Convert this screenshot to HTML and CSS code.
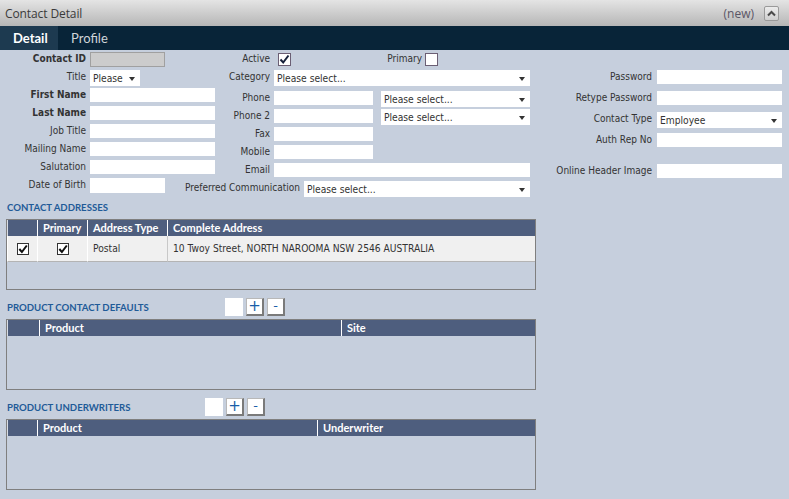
FILE: index.html
```html
<!DOCTYPE html>
<html>
<head>
<meta charset="utf-8">
<link rel="stylesheet" href="styles.css">
</head>
<body>
<div class="titlebar">
  <span class="title">Contact Detail</span>
  <span class="grow"></span>
  <span class="new">(new)</span>
  <span class="collapse"><svg width="13" height="13" viewBox="0 0 13 13"><path d="M3 8.5 L6.5 5 L10 8.5" fill="none" stroke="#4a4a4a" stroke-width="2"/></svg></span>
</div>
<div class="tabs">
  <div class="tab active">Detail</div>
  <div class="tab">Profile</div>
</div>
<div class="form">
  <div class="col col-left">
    <div class="row"><span class="lbl b">Contact ID</span><span class="box ro w75"></span></div>
    <div class="row"><span class="lbl">Title</span><span class="sel w50"><span class="st">Please</span><span class="arr"></span></span></div>
    <div class="row"><span class="lbl b">First Name</span><span class="box w125"></span></div>
    <div class="row"><span class="lbl b">Last Name</span><span class="box w125"></span></div>
    <div class="row"><span class="lbl">Job Title</span><span class="box w125"></span></div>
    <div class="row"><span class="lbl">Mailing Name</span><span class="box w125"></span></div>
    <div class="row"><span class="lbl">Salutation</span><span class="box w125"></span></div>
    <div class="row"><span class="lbl">Date of Birth</span><span class="box tall w75"></span></div>
  </div>
  <div class="col col-mid">
    <div class="row"><span class="lbl">Active</span><span class="chk active"><svg width="11" height="11" viewBox="0 0 11 11"><path d="M1.5 5.5 L4.2 8.5 L9.5 1.5" fill="none" stroke="#15203a" stroke-width="2"/></svg></span><span class="lbl2">Primary</span><span class="chk"></span></div>
    <div class="row r21"><span class="lbl">Category</span><span class="sel w256"><span class="st">Please select...</span><span class="arr"></span></span></div>
    <div class="row"><span class="lbl">Phone</span><span class="box w99"></span><span class="sel w149 ml8"><span class="st">Please select...</span><span class="arr"></span></span></div>
    <div class="row"><span class="lbl">Phone 2</span><span class="box w99"></span><span class="sel w149 ml8"><span class="st">Please select...</span><span class="arr"></span></span></div>
    <div class="row"><span class="lbl">Fax</span><span class="box w99"></span></div>
    <div class="row"><span class="lbl">Mobile</span><span class="box w99"></span></div>
    <div class="row"><span class="lbl">Email</span><span class="box w256"></span></div>
    <div class="row"><span class="lbl wide">Preferred Communication</span><span class="sel w226"><span class="st">Please select...</span><span class="arr"></span></span></div>
  </div>
  <div class="col col-right">
    <div class="row r21"><span class="lbl">Password</span><span class="box w125"></span></div>
    <div class="row r21"><span class="lbl">Retype Password</span><span class="box w125"></span></div>
    <div class="row r21"><span class="lbl">Contact Type</span><span class="sel w125"><span class="st">Employee</span><span class="arr"></span></span></div>
    <div class="row r31"><span class="lbl">Auth Rep No</span><span class="box w125"></span></div>
    <div class="row r21"><span class="lbl">Online Header Image</span><span class="box w125"></span></div>
  </div>
</div>

<div class="sections">
  <div class="section">
    <div class="shead"><span class="stitle">CONTACT ADDRESSES</span></div>
    <div class="grid g-ca">
      <div class="th"></div><div class="th">Primary</div><div class="th">Address Type</div><div class="th">Complete Address</div>
      <div class="td c"><span class="chk2"><svg width="10" height="10" viewBox="0 0 10 10"><path d="M1.3 5 L3.9 8 L8.8 1.5" fill="none" stroke="#111" stroke-width="2"/></svg></span></div>
      <div class="td c"><span class="chk2"><svg width="10" height="10" viewBox="0 0 10 10"><path d="M1.3 5 L3.9 8 L8.8 1.5" fill="none" stroke="#111" stroke-width="2"/></svg></span></div>
      <div class="td">Postal</div>
      <div class="td addr">10 Twoy Street, NORTH NAROOMA NSW 2546 AUSTRALIA</div>
    </div>
  </div>
  <div class="section">
    <div class="shead"><span class="stitle w217">PRODUCT CONTACT DEFAULTS</span><span class="blank"></span><span class="btn">+</span><span class="btn minus">-</span></div>
    <div class="grid g-pcd">
      <div class="th"></div><div class="th">Product</div><div class="th">Site</div>
    </div>
  </div>
  <div class="section">
    <div class="shead"><span class="stitle w197">PRODUCT UNDERWRITERS</span><span class="blank"></span><span class="btn">+</span><span class="btn minus">-</span></div>
    <div class="grid g-pu">
      <div class="th"></div><div class="th">Product</div><div class="th">Underwriter</div>
    </div>
  </div>
</div>
</body>
</html>
```

FILE: styles.css
```css
html, body {
  margin: 0;
  padding: 0;
}
body {
  width: 789px;
  height: 499px;
  overflow: hidden;
  background: #c6cfdd;
  font-family: "DejaVu Sans Condensed", "DejaVu Sans", sans-serif;
  font-stretch: condensed;
  font-size: 10px;
  color: #333;
}
.titlebar {
  height: 26px;
  display: flex;
  align-items: center;
  background: linear-gradient(#e4e4e4, #b6b6b6);
  padding: 0 10px 0 5px;
  box-sizing: border-box;
}
.title {
  font-family: "Open Sans", sans-serif;
  font-stretch: normal;
  font-size: 12px;
  color: #3a3a3a;
  letter-spacing: -0.1px;
}
.grow { flex: 1; }
.new {
  font-family: "Open Sans", sans-serif;
  font-stretch: normal;
  font-size: 12px;
  color: #5a5566;
  margin-right: 10px;
}
.collapse {
  width: 13px;
  height: 13px;
  border: 1px solid #9a9a9a;
  border-radius: 2px;
  background: linear-gradient(#ececec, #cfcfcf);
  display: flex;
}
.tabs {
  height: 24px;
  background: #082438;
  display: flex;
}
.tab {
  font-family: Lato, sans-serif;
  font-stretch: normal;
  font-size: 13px;
  color: #d0d4d8;
  line-height: 24px;
  padding: 0 12px 0 13px;
}
.tab.active {
  background: #1d3a50;
  color: #fff;
  font-weight: bold;
  width: 58px;
  box-sizing: border-box;
}
.form {
  height: 148px;
  display: flex;
}
.col { display: flex; flex-direction: column; }
.col-left { width: 215px; padding-top: 2px; }
.col-mid { width: 316px; padding-top: 2px; }
.col-right { width: 258px; padding-top: 20px; }
.row {
  height: 18px;
  display: flex;
  align-items: flex-start;
  flex-shrink: 0;
}
.row.r21 { height: 21px; }
.row.r31 { height: 31px; }
.lbl {
  text-align: right;
  line-height: 14px;
  white-space: nowrap;
  flex-shrink: 0;
}
.lbl.b { font-weight: bold; }
.col-left .lbl { width: 86px; margin-right: 4px; }
.col-mid .lbl { width: 55px; margin-right: 4px; }
.col-mid .lbl.wide { width: 130px; margin-left: -45px; }
.col-right .lbl { width: 121px; margin-right: 5px; }
.lbl2 {
  width: 131px;
  text-align: right;
  line-height: 14px;
  margin-right: 3px;
}
.box {
  height: 14px;
  background: #fff;
  box-sizing: border-box;
  flex-shrink: 0;
}
.box.tall { height: 15px; }
.box.ro {
  height: 15px;
  background: #cccccc;
  border: 1px solid #a0a0a0;
}
.sel {
  height: 16px;
  background: #fff;
  display: flex;
  align-items: center;
  overflow: hidden;
  flex-shrink: 0;
  font-size: 10.2px;
}
.st {
  flex: 1;
  padding-left: 3px;
  white-space: nowrap;
  overflow: hidden;
  color: #333;
  line-height: 16px;
  padding-top: 1px;
}
.arr {
  width: 0;
  height: 0;
  border-left: 3.5px solid transparent;
  border-right: 3.5px solid transparent;
  border-top: 4px solid #333;
  margin: 2px 5px 0 3px;
  flex-shrink: 0;
}
.w50 { width: 50px; }
.w75 { width: 75px; }
.w99 { width: 99px; }
.w125 { width: 125px; }
.w149 { width: 149px; }
.w226 { width: 226px; }
.w256 { width: 256px; }
.ml8 { margin-left: 8px; }
.chk {
  width: 13px;
  height: 13px;
  box-sizing: border-box;
  border: 1px solid #6b5f74;
  background: #fff;
  display: flex;
  align-items: center;
  justify-content: center;
  flex-shrink: 0;
  margin-top: 1px;
}
.chk.active { margin-left: 4px; }
.sections { padding-left: 6px; }
.section { width: 530px; margin-bottom: 8px; }
.shead {
  height: 18px;
  display: flex;
  align-items: center;
  margin-bottom: 3px;
}
.stitle {
  font-family: Lato, sans-serif;
  font-stretch: normal;
  font-weight: bold;
  font-size: 9.6px;
  color: #1f5b98;
  padding-left: 1px;
}
.stitle.w217 { width: 217px; }
.stitle.w197 { width: 197px; }
.blank {
  width: 18px;
  height: 18px;
  background: #fff;
  margin-left: 1px;
}
.btn {
  width: 18px;
  height: 18px;
  box-sizing: border-box;
  margin-left: 3px;
  background: #fff;
  border: 1px solid #b8b8b8;
  border-right: 2px solid #7a7a7a;
  border-bottom: 2px solid #7a7a7a;
  color: #1a5ea8;
  font-family: "DejaVu Sans", sans-serif;
  font-stretch: normal;
  font-size: 15px;
  line-height: 14px;
  text-align: center;
}
.btn.minus { font-size: 13px; line-height: 13px; }
.grid {
  height: 71px;
  box-sizing: border-box;
  border: 1px solid #7f7f7f;
  display: grid;
  grid-template-rows: 16px 26px;
  align-content: start;
}
.g-ca { grid-template-columns: 30px 50px 80px 1fr; }
.g-pcd { grid-template-columns: 32px 302px 1fr; }
.g-pu { grid-template-columns: 30px 280px 1fr; }
.th {
  background: #4e5e7e;
  border-left: 1px solid #fff;
  color: #fff;
  font-family: Lato, sans-serif;
  font-stretch: normal;
  font-weight: bold;
  font-size: 11px;
  line-height: 16px;
  padding-left: 5px;
  white-space: nowrap;
}
.th:first-child { border-left-color: #d8dde6; }
.td {
  background: #f0f0f0;
  border-left: 1px solid #fff;
  border-bottom: 1px solid #b4b4b4;
  display: flex;
  align-items: center;
  padding-left: 5px;
  font-size: 10.2px;
  white-space: nowrap;
}
.td.addr { border-left-color: #c8c8c8; }
.td.c { justify-content: center; padding-left: 0; }
.chk2 {
  width: 12px;
  height: 12px;
  box-sizing: border-box;
  border: 1px solid #333;
  background: #fff;
  display: flex;
  align-items: center;
  justify-content: center;
}
```
